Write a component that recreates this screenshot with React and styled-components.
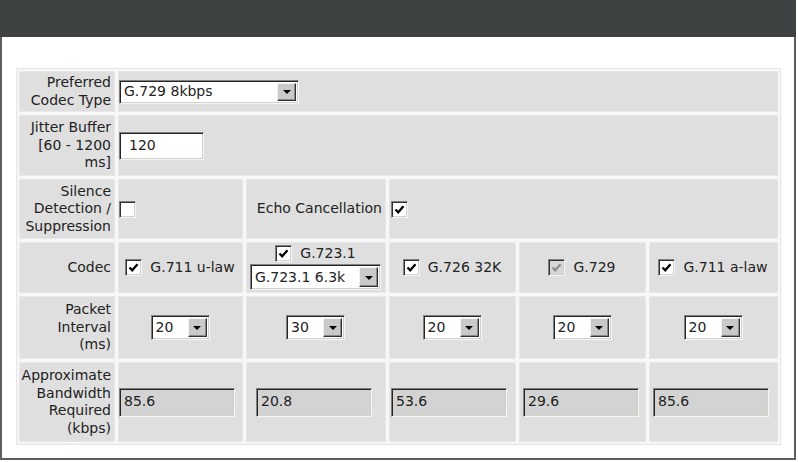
import React from 'react';
import styled, { createGlobalStyle } from 'styled-components';

const GlobalStyle = createGlobalStyle`
  body {
    margin: 0;
    background: #ffffff;
    font-family: "DejaVu Sans", Verdana, sans-serif;
  }
`;

const Panel = styled.div`
  width: 796px;
  height: 460px;
  box-sizing: border-box;
  border: 2px solid #5e5e5e;
  border-top: none;
  background: #fff;
  display: flex;
  flex-direction: column;
`;

const TitleBar = styled.div`
  height: 37px;
  background: #3f4243;
  margin: 0 -2px;
`;

const Body = styled.div`
  padding: 31px 15px 0 14px;
`;

const Grid = styled.div`
  display: grid;
  grid-template-columns: 96px 125px 140px 127px 127px 129px;
  grid-template-rows: 41px 61px 60px 51px 63px 80px;
  gap: 3px;
  padding: 2px;
  background: #f7f7f7;
  border: 1px solid #e6e6e6;
  width: fit-content;
`;

const Cell = styled.div`
  grid-column: span ${p => p.$span || 1};
  background: #dfdfdf;
  box-shadow: inset 0 0 0 1px #e8e8e8;
  display: flex;
  align-items: center;
  justify-content: ${p => p.$align || 'flex-start'};
  padding: ${p => p.$pad || '0 2px 0 1px'};
  font-size: 14px;
  line-height: 17.5px;
  color: #222;
  white-space: nowrap;
`;

const Label = styled(Cell)`
  justify-content: flex-end;
  text-align: right;
  padding: 0 4px 0 0;
`;

const Stack = styled.div`
  display: flex;
  flex-direction: column;
  align-items: center;
  gap: 2px;
`;

const Option = styled.label`
  display: flex;
  align-items: center;
  gap: 8px;
  font-size: 14px;
`;

const Box = styled.span`
  display: inline-flex;
  align-items: center;
  justify-content: center;
  width: 17px;
  height: 17px;
  box-sizing: border-box;
  border: 1px solid;
  border-color: #808080 #f4f4f4 #f4f4f4 #808080;
  box-shadow: inset 1px 1px 0 #303030, inset -1px -1px 0 #d4d0c8;
  background: ${p => (p.$disabled ? '#d6d6d6' : '#fff')};
  margin-left: ${p => p.$ml || 0}px;
`;

const Check = ({ checked, disabled, ml }) => (
  <Box $disabled={disabled} $ml={ml}>
    {checked && (
      <svg width="11" height="11" viewBox="0 0 11 11">
        <path
          d="M1.5 5.5 L4.2 8.2 L9.5 2.2"
          fill="none"
          stroke={disabled ? '#8c8c8c' : '#000'}
          strokeWidth="2.3"
        />
      </svg>
    )}
  </Box>
);

const Field = styled.div`
  display: flex;
  align-items: center;
  width: ${p => p.$w}px;
  height: ${p => p.$h}px;
  margin-left: ${p => p.$ml || 0}px;
  box-sizing: border-box;
  border: 1px solid;
  border-color: #808080 #f6f6f6 #f6f6f6 #808080;
  box-shadow: inset 1px 1px 0 #252525, inset -1px -1px 0 #d4d0c8;
  background: ${p => (p.$readOnly ? '#d3d3d3' : '#fff')};
  font-size: 14px;
  color: #222;
`;

const FieldText = styled.span`
  flex: 1;
  padding-left: ${p => p.$pl || 4}px;
`;

const ArrowButton = styled.span`
  width: 19px;
  align-self: stretch;
  margin: 2px 2px 2px 0;
  box-sizing: border-box;
  background: #c9c9c9;
  border: 1px solid;
  border-color: #f2f2f2 #303030 #303030 #f2f2f2;
  box-shadow: inset -1px -1px 0 #8a8a8a;
  display: flex;
  align-items: center;
  justify-content: center;

  &::after {
    content: '';
    border-left: 4px solid transparent;
    border-right: 4px solid transparent;
    border-top: 4px solid #000;
    margin-top: 1px;
  }
`;

const Select = ({ value, w, h = 25 }) => (
  <Field $w={w} $h={h}>
    <FieldText>{value}</FieldText>
    <ArrowButton />
  </Field>
);

const codecs = [
  { name: 'G.711 u-law', interval: '20', bw: '85.6', indent: 1 },
  { name: 'G.723.1', interval: '30', bw: '20.8', indent: 10, sub: 'G.723.1 6.3k' },
  { name: 'G.726 32K', interval: '20', bw: '53.6', indent: 2 },
  { name: 'G.729', interval: '20', bw: '29.6', indent: 4, disabled: true },
  { name: 'G.711 a-law', interval: '20', bw: '85.6', indent: 4 },
];

export default function App() {
  return (
    <>
      <GlobalStyle />
      <Panel>
        <TitleBar />
        <Body>
          <Grid>
            <Label>Preferred<br />Codec Type</Label>
            <Cell $span={5}>
              <Select value="G.729 8kbps" w={180} h={24} />
            </Cell>

            <Label>Jitter Buffer<br />[60 - 1200<br />ms]</Label>
            <Cell $span={5}>
              <Field $w={85} $h={28}>
                <FieldText $pl={9}>120</FieldText>
              </Field>
            </Cell>

            <Label>Silence<br />Detection /<br />Suppression</Label>
            <Cell>
              <Check ml={0} />
            </Cell>
            <Label>Echo Cancellation</Label>
            <Cell $span={3}>
              <Check checked ml={1} />
            </Cell>

            <Label>Codec</Label>
            {codecs.map(c => (
              <Cell key={c.name} $align="center">
                {c.sub ? (
                  <Stack>
                    <Option>
                      <Check checked />
                      {c.name}
                    </Option>
                    <Select value={c.sub} w={131} h={26} />
                  </Stack>
                ) : (
                  <Option>
                    <Check checked disabled={c.disabled} />
                    {c.name}
                  </Option>
                )}
              </Cell>
            ))}

            <Label>Packet<br />Interval<br />(ms)</Label>
            {codecs.map(c => (
              <Cell key={c.name} $align="center">
                <Select value={c.interval} w={59} h={25} />
              </Cell>
            ))}

            <Label>Approximate<br />Bandwidth<br />Required<br />(kbps)</Label>
            {codecs.map(c => (
              <Cell key={c.name} $pad="0">
                <Field $w={116} $h={29} $ml={c.indent} $readOnly>
                  <FieldText $pl={4}>{c.bw}</FieldText>
                </Field>
              </Cell>
            ))}
          </Grid>
        </Body>
      </Panel>
    </>
  );
}
